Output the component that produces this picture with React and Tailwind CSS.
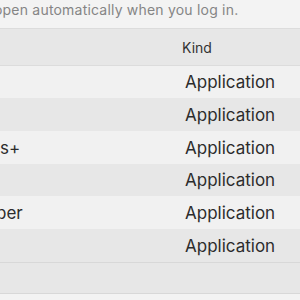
export default function App() {
  const rows = [
    { name: "", ml: "", bg: "bg-[#f1f1f1]", h: "h-[32px]" },
    { name: "", ml: "", bg: "bg-[#e7e7e7]", h: "h-[33px]" },
    { name: "s+", ml: "ml-0", bg: "bg-[#f1f1f1]", h: "h-[33px]" },
    { name: "", ml: "", bg: "bg-[#e7e7e7]", h: "h-[32px]" },
    { name: "per", ml: "ml-[-4px]", bg: "bg-[#f1f1f1]", h: "h-[33px]" },
    { name: "", ml: "", bg: "bg-[#e7e7e7]", h: "h-[33px]" },
  ];
  return (
    <div
      className="w-[300px] h-[300px] overflow-hidden bg-[#f3f3f3] flex flex-col"
      style={{ fontFamily: "Inter, 'Liberation Sans', sans-serif" }}
    >
      <div className="h-[28px] shrink-0 flex items-start pt-[1px] overflow-hidden">
        <span className="ml-[-6px] text-[14px] leading-[18px] tracking-[0.2px] text-[#858585] whitespace-nowrap">
          open automatically when you log in.
        </span>
      </div>
      <div className="border-t border-b border-[#dcdcdc] h-[38px] shrink-0 bg-[#e7e7e7] flex items-center">
        <div className="w-[182px] shrink-0" />
        <span className="text-[14px] text-[#333333]">Kind</span>
      </div>
      {rows.map((r, i) => (
        <div key={i} className={`${r.h} ${r.bg} shrink-0 flex items-center pt-[2px]`}>
          <div className="w-[185px] shrink-0 overflow-hidden text-[17px] text-[#2c2c2c] whitespace-nowrap text-left">
            {r.name && <span className={`block ${r.ml}`}>{r.name}</span>}
          </div>
          <span className="text-[17px] text-[#2c2c2c] whitespace-nowrap">Application</span>
        </div>
      ))}
      <div className="h-[32px] shrink-0 bg-[#e7e7e7] border-t border-b border-[#d8d8d8]" />
    </div>
  );
}
